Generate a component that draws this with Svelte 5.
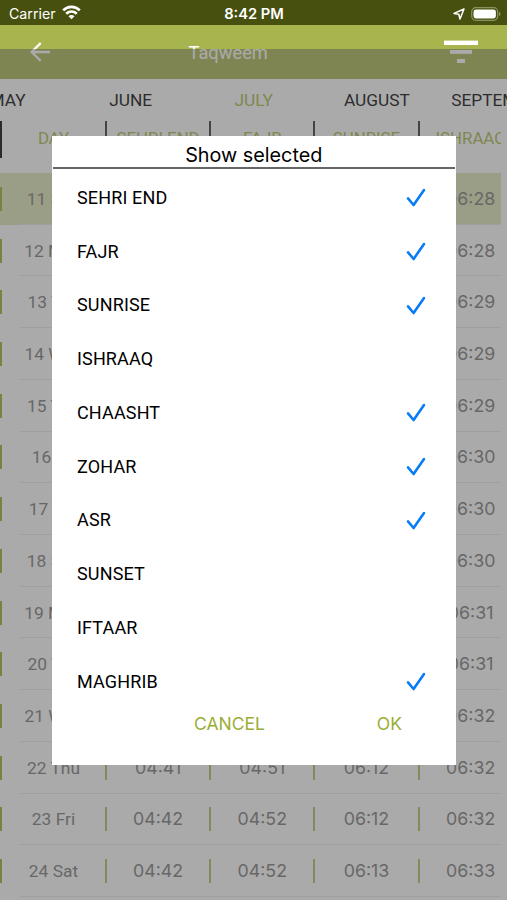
<script lang="ts">
  interface Day {
    label: string;
    times: string[];
    selected?: boolean;
  }

  const months = ['MAY', 'JUNE', 'JULY', 'AUGUST', 'SEPTEMBER'];
  const columns = ['DAY', 'SEHRI END', 'FAJR', 'SUNRISE', 'ISHRAAQ'];

  const days: Day[] = [
    { label: '11 Sun', times: ['04:34', '04:44', '06:08', '06:28'], selected: true },
    { label: '12 Mon', times: ['04:35', '04:45', '06:08', '06:28'] },
    { label: '13 Tue', times: ['04:35', '04:45', '06:09', '06:29'] },
    { label: '14 Wed', times: ['04:36', '04:46', '06:09', '06:29'] },
    { label: '15 Thu', times: ['04:37', '04:47', '06:09', '06:29'] },
    { label: '16 Fri', times: ['04:37', '04:47', '06:10', '06:30'] },
    { label: '17 Sat', times: ['04:38', '04:48', '06:10', '06:30'] },
    { label: '18 Sun', times: ['04:38', '04:48', '06:10', '06:30'] },
    { label: '19 Mon', times: ['04:39', '04:49', '06:11', '06:31'] },
    { label: '20 Tue', times: ['04:40', '04:50', '06:11', '06:31'] },
    { label: '21 Wed', times: ['04:40', '04:50', '06:12', '06:32'] },
    { label: '22 Thu', times: ['04:41', '04:51', '06:12', '06:32'] },
    { label: '23 Fri', times: ['04:42', '04:52', '06:12', '06:32'] },
    { label: '24 Sat', times: ['04:42', '04:52', '06:13', '06:33'] }
  ];

  let options = $state([
    { name: 'SEHRI END', checked: true },
    { name: 'FAJR', checked: true },
    { name: 'SUNRISE', checked: true },
    { name: 'ISHRAAQ', checked: false },
    { name: 'CHAASHT', checked: true },
    { name: 'ZOHAR', checked: true },
    { name: 'ASR', checked: true },
    { name: 'SUNSET', checked: false },
    { name: 'IFTAAR', checked: false },
    { name: 'MAGHRIB', checked: true }
  ]);

  let open = $state(true);
</script>

<div class="screen">
  <div class="status">
    <div class="status-side">
      <span class="carrier">Carrier</span>
      <svg class="wifi" width="19" height="15" viewBox="0 0 19 15" fill="none" stroke="#fff" stroke-width="2.7">
        <path d="M1.2 5.4C6 .7 13 .7 17.8 5.4" />
        <path d="M4.2 8.8c3.1-2.8 7.5-2.8 10.6 0" />
        <path d="M9.5 14.3 6.5 11.2c1.8-1.6 4.2-1.6 6 0Z" fill="#fff" stroke="none" />
      </svg>
    </div>
    <span class="clock">8:42 PM</span>
    <div class="status-side end">
      <svg width="12" height="12" viewBox="0 0 12 12" fill="none" stroke="#fff" stroke-width="1.5" stroke-linejoin="round">
        <path d="M11 1 1 5.4l4.8.8L7 11Z" />
      </svg>
      <svg width="30" height="14" viewBox="0 0 30 14">
        <rect x=".7" y=".7" width="26" height="12.6" rx="4" fill="none" stroke="#8b9262" stroke-width="1.2" />
        <rect x="2.5" y="2.5" width="22.4" height="9" rx="2.4" fill="#fff" />
        <path d="M28 5c2 .6 2 3.4 0 4Z" fill="#8b9262" />
      </svg>
    </div>
  </div>

  <header>
    <svg class="back" width="20" height="20" viewBox="0 0 20 20" fill="none" stroke="#fff" stroke-width="2.4">
      <path d="M20 10H1.7M10.7 1 1.7 10l9 9" />
    </svg>
    <h1>Taqweem</h1>
    <svg class="filter" width="34" height="24" viewBox="0 0 34 24" fill="#fff">
      <rect x="0" y="0.6" width="34" height="4.4" />
      <rect x="6" y="10" width="22" height="3.8" />
      <rect x="13" y="19" width="8" height="4" />
    </svg>
  </header>

  <nav>
    {#each months as month}
      <span class:active={month === 'JULY'}>{month}</span>
    {/each}
  </nav>

  <div class="table">
    <div class="row head">
      {#each columns as column}
        <span class="cell">{column}</span>
      {/each}
    </div>
    {#each days as day}
      <div class="row" class:selected={day.selected}>
        <span class="cell date">{day.label}</span>
        {#each day.times as time}
          <span class="cell time">{time}</span>
        {/each}
      </div>
    {/each}
  </div>

  {#if open}
    <div class="overlay"></div>
    <div class="dialog">
      <h2>Show selected</h2>
      <div class="options">
        {#each options as option}
          <button class="option" onclick={() => (option.checked = !option.checked)}>
            <span>{option.name}</span>
            {#if option.checked}
              <svg width="20" height="20" viewBox="0 0 20 20" fill="none" stroke="#087cf5" stroke-width="2.6" stroke-linecap="round" stroke-linejoin="round">
                <path d="m2 11.4 5.6 6.6L18 3" />
              </svg>
            {/if}
          </button>
        {/each}
      </div>
      <div class="actions">
        <button class="cancel" onclick={() => (open = false)}>CANCEL</button>
        <button class="ok" onclick={() => (open = false)}>OK</button>
      </div>
    </div>
  {/if}
</div>

<style>
  :global(body) {
    margin: 0;
  }

  .screen {
    position: relative;
    width: 507px;
    height: 900px;
    overflow: hidden;
    background: #fff;
    font-family: Roboto, sans-serif;
  }

  button {
    padding: 0;
    border: 0;
    background: none;
    font: inherit;
    color: inherit;
    cursor: pointer;
  }

  .status {
    display: flex;
    align-items: center;
    height: 25px;
    padding: 2px 6px 0 9px;
    box-sizing: border-box;
    background: #47500e;
    color: #fff;
    font: 15px Inter, sans-serif;
  }

  .status-side {
    flex: 1;
    display: flex;
    align-items: center;
    gap: 6px;
  }

  .carrier {
    font-size: 14.2px;
  }

  .wifi {
    margin-bottom: 2px;
  }

  .end {
    justify-content: flex-end;
  }

  .clock {
    margin-right: 2px;
    font-size: 14.7px;
    font-weight: 600;
  }

  header {
    display: flex;
    align-items: center;
    height: 54px;
    padding: 0 29px 0 30px;
    background: #a8b54f;
    color: #fff;
  }

  h1 {
    flex: 1;
    margin: 0 0 0 138.5px;
    font-size: 18.3px;
    font-weight: 400;
  }

  nav {
    display: flex;
    height: 42px;
    margin-left: -54px;
    font-size: 17.3px;
    line-height: 43px;
    color: #000;
  }

  nav span {
    flex: 0 0 123.1px;
    text-align: center;
  }

  nav .active {
    color: #a9b84a;
  }

  .table {
    width: 501px;
    overflow: hidden;
  }

  .row {
    position: relative;
    display: flex;
    align-items: center;
    width: 524px;
    height: 51.72px;
    color: #797979;
  }

  .row:not(.head)::after {
    content: '';
    position: absolute;
    left: 20px;
    right: 0;
    bottom: 0;
    height: 1px;
    background: #e8e8e8;
  }

  .head {
    align-items: flex-start;
    height: 52px;
    color: #a9b84a;
    font-size: 16.8px;
  }

  .selected {
    background: #dfe7b7;
  }

  .cell {
    flex: 0 0 104.2px;
    height: 24px;
    box-sizing: border-box;
    border-left: 2px solid #b2bf60;
    line-height: 24px;
    text-align: center;
  }

  .cell:first-child {
    flex-basis: 105px;
    border-left: 2px solid #9aae2c;
  }

  .head .cell,
  .head .cell:first-child {
    height: 37px;
    border-left-color: #333;
    line-height: 35px;
  }

  .head .cell:first-child {
    border-left-color: #000;
  }

  .date {
    font-size: 17.4px;
  }

  .time {
    font-family: Inter, sans-serif;
    font-size: 17.8px;
  }

  .overlay {
    position: absolute;
    inset: 48.5px 0 0;
    background: rgba(85, 85, 85, 0.5);
  }

  .dialog {
    position: absolute;
    top: 136px;
    left: 51.5px;
    width: 404.5px;
    height: 629px;
    background: #fff;
    color: #000;
  }

  h2 {
    height: 31px;
    margin: 0 1px;
    border-bottom: 2px solid #666;
    font: 19.8px/38px Inter, sans-serif;
    text-align: center;
  }

  .options {
    display: flex;
    flex-direction: column;
    padding-top: 1.5px;
  }

  .option {
    display: flex;
    align-items: center;
    justify-content: space-between;
    height: 53.75px;
    padding: 0 30px 0 25.5px;
    font-size: 18px;
    letter-spacing: 0.15px;
  }

  .actions {
    display: flex;
    justify-content: flex-end;
    gap: 112px;
    padding: 4.5px 54px 0 0;
    color: #9aad35;
    font: 17.5px/22px Inter, sans-serif;
  }
</style>
